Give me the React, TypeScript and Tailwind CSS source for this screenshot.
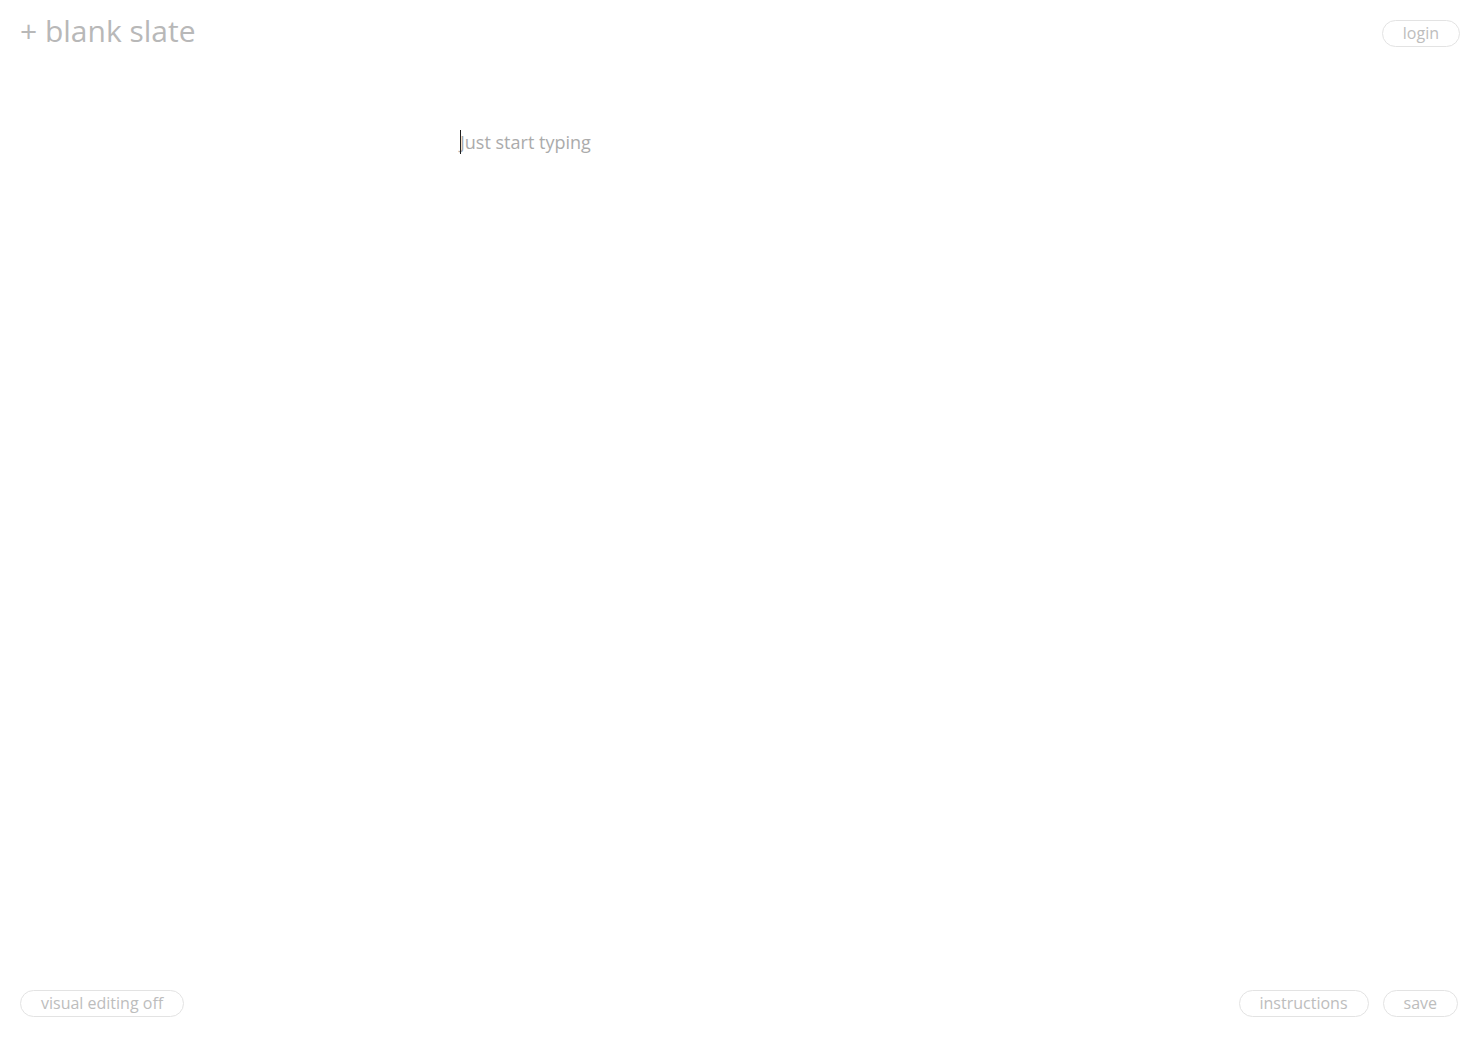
import React from "react";

function PillButton({ children }: { children: React.ReactNode }) {
  return (
    <button className="rounded-full border border-[#e3e3e3] bg-white px-5 text-[16px] leading-[25px] text-[#bdbdbd]">
      {children}
    </button>
  );
}

export default function App() {
  return (
    <div className="flex h-[1037px] flex-col bg-white font-['Open_Sans',sans-serif]">
      {/* Header */}
      <header className="flex items-start justify-between px-5 pt-[12px]">
        <h1 className="text-[30px] leading-[38px] font-normal text-[#b8b8b8]">
          + blank slate
        </h1>
        <div className="pt-[8px]">
          <PillButton>login</PillButton>
        </div>
      </header>

      {/* Editor */}
      <main className="flex-1">
        <div className="mx-auto mt-[80px] w-[560px]">
          <div className="relative text-[18px] leading-[24px] text-[#ababab]">
            <span className="absolute left-0 top-0 h-[24px] w-px bg-[#222]" />
            Just start typing
          </div>
        </div>
      </main>

      {/* Footer */}
      <footer className="flex items-center justify-between px-5 pb-[20px]">
        <PillButton>visual editing off</PillButton>
        <div className="flex items-center gap-[14px] pr-[2px]">
          <PillButton>instructions</PillButton>
          <PillButton>save</PillButton>
        </div>
      </footer>
    </div>
  );
}
